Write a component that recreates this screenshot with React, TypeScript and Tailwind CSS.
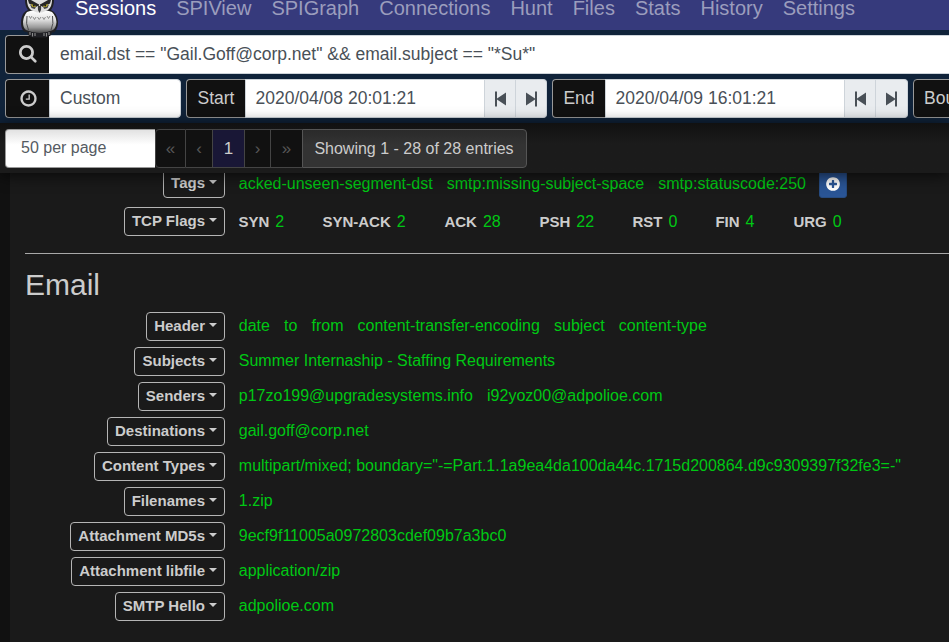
import React from "react";

const CIRCLE =
  "q0 209-103 385.5t-279.5 279.5-385.5 103-385.5-103-279.5-279.5-103-385.5 103-385.5 279.5-279.5 385.5-103 385.5 103 279.5 279.5 103 385.5z";

function Glyph({ d, size }: { d: string; size: number }) {
  return (
    <svg width={size} height={size} viewBox="0 0 1792 1792" fill="currentColor" className="shrink-0">
      <path d={d} />
    </svg>
  );
}

const SEARCH =
  "M1152 704q0-185-131.5-316.5t-316.5-131.5-316.5 131.5-131.5 316.5 131.5 316.5 316.5 131.5 316.5-131.5 131.5-316.5zm512 832q0 52-38 90t-90 38q-54 0-90-38l-343-342q-179 124-399 124-143 0-273.5-55.5t-225-150-150-225-55.5-273.5 55.5-273.5 150-225 225-150 273.5-55.5 273.5 55.5 225 150 150 225 55.5 273.5q0 220-124 399l343 343q37 37 37 90z";
const CLOCK =
  "M1024 544v448q0 14-9 23t-23 9h-320q-14 0-23-9t-9-23v-64q0-14 9-23t23-9h224v-352q0-14 9-23t23-9h64q14 0 23 9t9 23zm416 352q0-148-73-273t-198-198-273-73-273 73-198 198-73 273 73 273 198 198 273 73 273-73 198-198 73-273zm224 0" + CIRCLE;
const PLUS =
  "M1344 960v-128q0-26-19-45t-45-19h-256v-256q0-26-19-45t-45-19h-128q-26 0-45 19t-19 45v256h-256q-26 0-45 19t-19 45v128q0 26 19 45t45 19h256v256q0 26 19 45t45 19h128q26 0 45-19t19-45v-256h256q26 0 45-19t19-45zm320-64" + CIRCLE;

function Owl() {
  return (
    <svg className="absolute left-[19px] top-0 z-20" width="42" height="39" viewBox="0 0 42 39">
      <defs>
        <linearGradient id="belly" x1="0" y1="0" x2="0" y2="1">
          <stop offset="0" stopColor="#ffffff" />
          <stop offset="0.4" stopColor="#e2e2e2" />
          <stop offset="0.75" stopColor="#9a9a9a" />
          <stop offset="1" stopColor="#4a4a4a" />
        </linearGradient>
      </defs>
      <path d="M6 0 H35 Q35 6 32 10 Q38 13 39 21 Q39.500 28 35.500 32 Q34 33 33 32 Q33 36 27 37.500 H14 Q8 36 8.500 32 Q4 33 2.500 27 Q1 20 4 14 Q6 11 9 10 Q6 6 6 0Z" fill="#202024" />
      <path d="M8 12 Q14 9 20.500 12 Q27 9 33 12 Q37 16 37.500 22 Q37 28 34 30 Q27 33 20.500 33 Q14 33 7 30 Q4 28 4 22 Q4.500 16 8 12Z" fill="url(#belly)" />
      <path d="M8 16 Q6.500 24 9.500 30 M33.500 16 Q35 24 32 30" fill="none" stroke="#4c4c4e" strokeWidth="1" />
      <path d="M8 0 H33 Q33 7 29 10 L23 12.500 H18 L12 10 Q8 7 8 0Z" fill="#dddddd" />
      <path d="M9 0 H12 L19 4 H22 L29 0 H32 L31 3.500 L24 7 L22.500 6 H18.500 L17 7 L10 3.500Z" fill="#252527" />
      <path d="M11 4.500 L17 7.500 L15.500 9 L12.500 8Z M30 4.500 L24 7.500 L25.500 9 L28.500 8Z" fill="#444446" />
      <path d="M12 3.800 L17 6 L16 7.300 L13 6.800Z M29 3.800 L24 6 L25 7.300 L28 6.800Z" fill="#b9aa2c" />
      <circle cx="14.800" cy="5.600" r="0.900" fill="#151515" />
      <circle cx="26.200" cy="5.600" r="0.900" fill="#151515" />
      <path d="M18.800 6 H22.200 L22 10 L20.500 13 L19 10Z" fill="#3a3a3d" />
      <path d="M19.800 3 H21.200 V6 H19.800Z" fill="#d5d5d5" />
      <path d="M10 16 l1.500 2.500 1.500-2.500 M14 17 l1.500 2.500 1.500-2.500 M18.500 17 l1.700 2.500 1.800-2.500 M23.500 17 l1.500 2.500 1.500-2.500 M28 16 l1.500 2.500 1.500-2.500" fill="none" stroke="#858585" strokeWidth="0.900" />
      <path d="M11 32 v3 M13.500 33 v3.500 M16 33 v3 M25 33 v3 M27.500 33 v3.500 M30 32 v3" stroke="#8c8c8c" strokeWidth="1.100" />
    </svg>
  );
}

function Step({ back, w }: { back?: boolean; w: string }) {
  return (
    <div
      className={
        "flex h-full items-center justify-center border border-l-0 border-[#ced4da] bg-[#e9ecef] text-[#495057] " +
        (back ? "" : "rounded-r ") +
        w
      }
    >
      <svg width="11" height="16" viewBox="0 0 11 16" fill="currentColor" className={back ? "" : "-scale-x-100"}>
        <path d="M0 .5h2v7L11 1.500v13L2 8.500v7H0z" />
      </svg>
    </div>
  );
}

function DateField({ label, value, w, lastW }: { label: string; value: string; w: string; lastW: string }) {
  return (
    <div className="flex h-[39px] shrink-0">
      <div className={"flex items-center justify-center rounded-l border border-r-0 border-[#999] bg-[#111] text-[#ccc] " + w}>{label}</div>
      <div className="flex w-[240px] items-center border border-[#ced4da] bg-white pl-[9.5px] text-[#495057]">{value}</div>
      <Step back w="w-[31px]" />
      <Step w={lastW} />
    </div>
  );
}

const nav = ["SPIView", "SPIGraph", "Connections", "Hunt", "Files", "Stats", "History", "Settings"];
const rows: [string, string[]][] = [
  ["Header", ["date", "to", "from", "content-transfer-encoding", "subject", "content-type"]],
  ["Subjects", ["Summer Internaship - Staffing Requirements"]],
  ["Senders", ["p17zo199@upgradesystems.info", "i92yoz00@adpolioe.com"]],
  ["Destinations", ["gail.goff@corp.net"]],
  ["Content Types", ['multipart/mixed; boundary="-=Part.1.1a9ea4da100da44c.1715d200864.d9c9309397f32fe3=-"']],
  ["Filenames", ["1.zip"]],
  ["Attachment MD5s", ["9ecf9f11005a0972803cdef09b7a3bc0"]],
  ["Attachment libfile", ["application/zip"]],
  ["SMTP Hello", ["adpolioe.com"]],
];
const flags: [string, string, string][] = [
  ["SYN", "2", "w-[84px]"],
  ["SYN-ACK", "2", "w-[122px]"],
  ["ACK", "28", "w-[95px]"],
  ["PSH", "22", "w-[93px]"],
  ["RST", "0", "w-[83px]"],
  ["FIN", "4", "w-[78px]"],
  ["URG", "0", "w-[60px]"],
];

function Label({ children }: { children: React.ReactNode }) {
  return (
    <div className="flex w-[225px] shrink-0 justify-end">
      <div className="flex h-[29px] items-center rounded-[4px] border border-[#b5b5b5] px-[7px] text-[15px] font-bold text-[#ccc]">
        {children}
        <span className="mb-[3px] ml-[3.5px] mr-[0.5px] border-x-4 border-t-4 border-x-transparent border-t-[#ccc]" />
      </div>
    </div>
  );
}

function Values({ items }: { items: string[] }) {
  return (
    <div className="ml-[13.8px] flex gap-[14.1px] pb-0.5 text-base text-[#00c814]">
      {items.map((v) => (
        <span key={v}>{v}</span>
      ))}
    </div>
  );
}

export default function App() {
  return (
    <div className="relative flex h-[642px] w-[949px] flex-col overflow-hidden whitespace-nowrap bg-[#1a1a1a] font-['Liberation_Sans',Arial,sans-serif]">
      <Owl />
      <nav className="flex h-[30px] shrink-0 gap-5 bg-[#363a7c] pl-[75px] text-xl leading-4 text-[#9b9dbd]">
        <span className="text-white">Sessions</span>
        {nav.map((n) => (
          <span key={n}>{n}</span>
        ))}
      </nav>

      <div className="h-[93px] shrink-0 bg-[#10233a] pl-[5px] pt-[5px] text-[17.5px]">
        <div className="flex h-[39px]">
          <div className="flex w-11 items-center justify-center rounded-l border border-r-0 border-[#999] bg-[#111] pl-0.5 text-[#ccc]">
            <Glyph d={SEARCH} size={19} />
          </div>
          <div className="flex flex-1 items-center border-y border-[#ced4da] bg-white pl-[11px] text-[#495057]">
            {'email.dst == "Gail.Goff@corp.net" && email.subject == "*Su*"'}
          </div>
        </div>
        <div className="mt-[5px] flex h-[39px] gap-[5px]">
          <div className="flex shrink-0">
            <div className="flex w-11 items-center justify-center rounded-l border border-r-0 border-[#999] bg-[#111] pb-px pl-px text-[#ccc]">
              <Glyph d={CLOCK} size={19} />
            </div>
            <div className="flex w-[132px] items-center rounded-r border border-[#ced4da] bg-white pl-2.5 text-[#495057]">Custom</div>
          </div>
          <DateField label="Start" value="2020/04/08 20:01:21" w="w-[59px]" lastW="w-[31px]" />
          <DateField label="End" value="2020/04/09 16:01:21" w="w-[53px]" lastW="w-8" />
          <div className="flex w-[120px] shrink-0 items-center rounded-l border border-[#999] bg-[#111] pl-2.5 text-[#ccc]">Bounding</div>
        </div>
      </div>

      <div className="z-10 h-[50px] shrink-0 bg-linear-to-b from-[#111] to-[#1b1b1b] to-40% pl-[5px] pt-1.5 shadow-[0_2px_16px_rgba(0,0,0,0.7)]">
        <div className="flex h-[39px]">
          <div className="flex w-[150px] items-center rounded-l border border-r-0 border-[#999] bg-linear-to-b from-[#e2e2e2] to-white to-40% pb-0.5 pl-[15px] text-base text-[#555b62]">50 per page</div>
          <div className="flex text-[17px] text-[#575757]">
            <div className="flex w-[31px] items-center justify-center rounded-l border border-[#444] bg-[#111]">«</div>
            <div className="flex w-[26px] items-center justify-center border-y border-[#444] bg-[#111]">‹</div>
            <div className="flex w-[33px] items-center justify-center border border-[#444] bg-[#191736] text-[#ccc]">1</div>
            <div className="flex w-[25px] items-center justify-center border-y border-[#444] bg-[#111]">›</div>
            <div className="flex w-8 items-center justify-center border border-r-0 border-[#444] bg-[#111]">»</div>
          </div>
          <div className="flex w-[225px] items-center justify-center rounded-r border border-[#555] bg-linear-to-b from-[#2a2a2a] to-[#333] to-40% pr-px text-base text-[#ccc]">Showing 1 - 28 of 28 entries</div>
        </div>
      </div>

      <div className="flex flex-1">
        <div className="w-2.5 shrink-0 bg-[#111]" />
        <div className="-ml-2.5 flex-1">
          <div className="-mt-1 flex h-[29px] items-center">
            <Label>Tags</Label>
            <div className="pt-[3px]">
              <Values items={["acked-unseen-segment-dst", "smtp:missing-subject-space", "smtp:statuscode:250"]} />
            </div>
            <div className="ml-[13px] flex h-[29px] w-7 items-center justify-center rounded-[3px] border border-[#264b80] bg-[#2a5596] text-white">
              <Glyph d={PLUS} size={16} />
            </div>
          </div>
          <div className="mt-[9px] flex h-[29px] items-center">
            <Label>TCP Flags</Label>
            <div className="ml-[13.4px] flex">
              {flags.map(([n, v, w]) => (
                <div key={n} className={"flex items-baseline " + w}>
                  <span className="text-[15px] font-bold text-[#ccc]">{n}</span>
                  <span className="ml-1.5 text-base text-[#00c814]">{v}</span>
                </div>
              ))}
            </div>
          </div>
          <div className="ml-[25px] mt-[17px] h-px bg-[#a8a8a8]" />
          <h4 className="ml-[25px] mt-[13px] h-[45px] text-[30px] leading-9 text-[#ccc]">Email</h4>
          <div className="flex flex-col gap-1.5">
            {rows.map(([l, v]) => (
              <div key={l} className="flex h-[29px] items-center">
                <Label>{l}</Label>
                <Values items={v} />
              </div>
            ))}
          </div>
        </div>
      </div>
    </div>
  );
}
